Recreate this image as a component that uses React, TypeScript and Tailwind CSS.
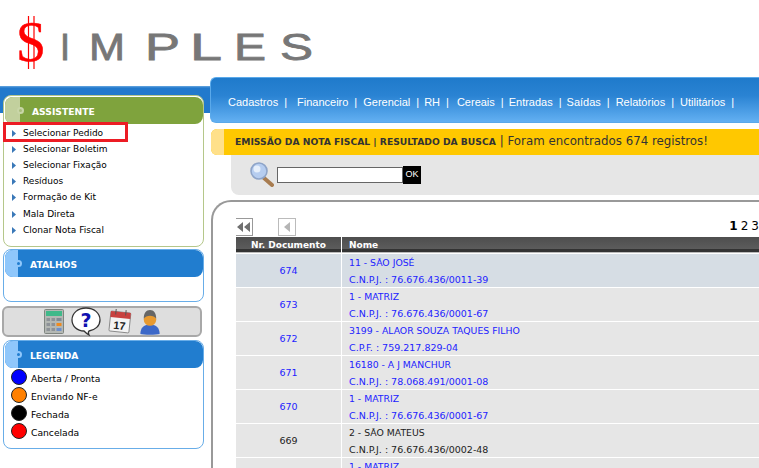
import React from "react";

const menuItems = [
  { label: "Cadastros", cls: "mr-[10px]" },
  { label: "Financeiro", cls: "mr-[6px]" },
  { label: "Gerencial", cls: "mr-[5px]" },
  { label: "RH", cls: "mr-[8px]" },
  { label: "Cereais", cls: "mr-[5px]" },
  { label: "Entradas", cls: "mr-[5px]" },
  { label: "Saídas", cls: "mr-[6px]" },
  { label: "Relatórios", cls: "mr-[6px]" },
  { label: "Utilitários", cls: "" },
];

const assistente = [
  { label: "Selecionar Pedido", cls: "h-[16px]", selected: true },
  { label: "Selecionar Boletim", cls: "h-[16px]", selected: false },
  { label: "Selecionar Fixação", cls: "h-[16px]", selected: false },
  { label: "Resíduos", cls: "h-[16px]", selected: false },
  { label: "Formação de Kit", cls: "h-[16px]", selected: false },
  { label: "Mala Direta", cls: "mt-[1px] h-[16px]", selected: false },
  { label: "Clonar Nota Fiscal", cls: "h-[16px]", selected: false },
];

const legenda = [
  { label: "Aberta / Pronta", cls: "bg-[#0000ff]" },
  { label: "Enviando NF-e", cls: "bg-[#ff8000]" },
  { label: "Fechada", cls: "bg-black" },
  { label: "Cancelada", cls: "bg-[#ff0000]" },
];

const rows = [
  { nr: "674", a: "11 - SÃO JOSÉ", b: "C.N.P.J. : 76.676.436/0011-39", hi: true, link: true },
  { nr: "673", a: "1 - MATRIZ", b: "C.N.P.J. : 76.676.436/0001-67", hi: false, link: true },
  { nr: "672", a: "3199 - ALAOR SOUZA TAQUES FILHO", b: "C.P.F. : 759.217.829-04", hi: false, link: true },
  { nr: "671", a: "16180 - A J MANCHUR", b: "C.N.P.J. : 78.068.491/0001-08", hi: false, link: true },
  { nr: "670", a: "1 - MATRIZ", b: "C.N.P.J. : 76.676.436/0001-67", hi: false, link: true },
  { nr: "669", a: "2 - SÃO MATEUS", b: "C.N.P.J. : 76.676.436/0002-48", hi: false, link: false },
  { nr: "668", a: "1 - MATRIZ", b: "C.N.P.J. : 76.676.436/0001-67", hi: false, link: true },
];

const logoLetters = [
  { c: "I", x: 45, w: 10 },
  { c: "M", x: 74, w: 36 },
  { c: "P", x: 130, w: 35 },
  { c: "L", x: 175, w: 32 },
  { c: "E", x: 219, w: 32 },
  { c: "S", x: 265, w: 33 },
];

const Logo = () => (
  <div className="h-[77px] pl-[15px] pt-[14px]">
    <svg width="310" height="60" viewBox="0 0 310 60">
      <text
        x="1"
        y="47"
        fontFamily="Liberation Serif"
        fontSize="56"
        fill="#f00"
        stroke="#f00"
        strokeWidth="0.5"
        textLength="30"
        lengthAdjust="spacingAndGlyphs"
      >
        S
      </text>
      <path d="M13.5 2V55M19 2V55" stroke="#f00" strokeWidth="1.2" />
      {logoLetters.map((l) => (
        <text
          key={l.c}
          x={l.x}
          y="46"
          fontFamily="Liberation Sans"
          fontSize="37.5"
          fill="#777777"
          stroke="#777777"
          strokeWidth="0.8"
          textLength={l.w}
          lengthAdjust="spacingAndGlyphs"
        >
          {l.c}
        </text>
      ))}
    </svg>
  </div>
);

const Arrow = () => (
  <svg width="4" height="7" viewBox="0 0 4 7" className="mr-[7px] mb-[2px] shrink-0">
    <path d="M0 0L4 3.5L0 7Z" fill="#3a78b8" />
  </svg>
);

const SectionHeader = ({
  title,
  bg,
  side,
  dot,
}: {
  title: string;
  bg: string;
  side: string;
  dot: string;
}) => (
  <div className={`relative flex h-[27px] items-center overflow-hidden rounded-[8px] ${bg}`}>
    <div className={`h-full ${side}`} />
    <div className={`absolute top-[10px] h-[7px] w-[7px] rounded-full border-2 ${dot}`} />
    <span className="ml-[12px] pt-[2px] text-[9.2px] font-bold text-white">{title}</span>
  </div>
);

const Calculator = () => (
  <svg width="20" height="25" viewBox="0 0 20 25">
    <rect x="0.5" y="0.5" width="19" height="24" rx="1" fill="#b4b8b4" stroke="#7f8580" />
    <rect x="2" y="2" width="16" height="5" fill="#3fb98a" />
    <g fill="#8d9298">
      <rect x="2.5" y="9" width="3.5" height="3" />
      <rect x="7.5" y="9" width="3.5" height="3" />
      <rect x="2.5" y="14" width="3.5" height="3" />
      <rect x="7.5" y="14" width="3.5" height="3" />
      <rect x="2.5" y="19" width="3.5" height="3" />
      <rect x="7.5" y="19" width="3.5" height="3" />
    </g>
    <rect x="12.5" y="9" width="5" height="3" fill="#7f8a96" />
    <rect x="12.5" y="14" width="5" height="3" fill="#f08a1d" />
    <rect x="12.5" y="19" width="5" height="3" fill="#6f8fc8" />
  </svg>
);

const Help = () => (
  <svg width="30" height="30" viewBox="0 0 30 30">
    <path
      d="M15 1C7 1 1 6 1 13c0 6 5 11 12 11 1 1 3 3 5 4-1-2-1-3 0-4 6-1 11-5 11-11C29 6 23 1 15 1Z"
      fill="#fff"
      stroke="#333"
      strokeWidth="1.3"
    />
    <text x="15" y="20" textAnchor="middle" fontFamily="DejaVu Sans" fontWeight="700" fontSize="19" fill="#1010b0">
      ?
    </text>
  </svg>
);

const Calendar = () => (
  <svg width="24" height="25" viewBox="0 0 24 25">
    <g transform="rotate(6 12 12)">
      <rect x="2" y="3" width="20" height="20" rx="1" fill="#f4f4f4" stroke="#777" strokeWidth="0.8" />
      <rect x="2" y="3" width="20" height="6" fill="#c8413f" />
      <path d="M7 0.5V6M17 0.5V6" stroke="#555" strokeWidth="1" />
      <text x="12" y="20.5" textAnchor="middle" fontFamily="Liberation Sans" fontWeight="700" fontSize="11" fill="#222">
        17
      </text>
    </g>
  </svg>
);

const Person = () => (
  <svg width="22" height="26" viewBox="0 0 22 27">
    <path d="M1 26c0-6 3-10 10-10s10 4 10 10c-3 1-17 1-20 0Z" fill="#3c68c8" />
    <circle cx="11" cy="11" r="6.5" fill="#e89a30" />
    <path d="M4.5 10C4.5 4 7 1 11 1s6.5 3 6.5 9C15 6 7 6 4.5 10Z" fill="#666" />
  </svg>
);

const Magnifier = () => (
  <svg width="24" height="25" viewBox="0 0 24 25">
    <path d="M14 16L22 23" stroke="#a87c50" strokeWidth="4" strokeLinecap="round" />
    <circle cx="9" cy="9" r="8" fill="#b6cdf0" stroke="#8ea4c8" strokeWidth="1.6" />
    <circle cx="7" cy="7" r="3.5" fill="#e6effb" />
  </svg>
);

const App = () => {
  return (
    <div className="h-[468px] w-[759px] overflow-hidden bg-white font-['DejaVu_Sans',sans-serif] text-[9px] text-black">
      <Logo />
      <div className="flex">
        {/* Sidebar */}
        <aside className="w-[210px] shrink-0 bg-[linear-gradient(transparent_9px,#6aa8e0_9px,#2279cc_11px,#2279cc_36px,transparent_36px)] bg-no-repeat pl-[3px] pt-[18px]">
          <div className="h-[152px] w-[201px] rounded-[8px] border border-[#b5c78a] bg-white pl-[1px] pt-[1px]">
            <SectionHeader
              title="ASSISTENTE"
              bg="bg-[#7fa33d]"
              side="w-[15px] bg-[#c2d09d]"
              dot="left-[12px] border-[#c9d6a8] bg-[#a9bd7c]"
            />
            <ul className="pl-[7px] pt-[2px]">
              {assistente.map((it) => (
                <li key={it.label} className={`relative flex items-center ${it.cls}`}>
                  <Arrow />
                  {it.label}
                  {it.selected && (
                    <div className="absolute left-[-9px] top-[-4px] h-[20px] w-[125px] border-[3px] border-[#ec1c24]" />
                  )}
                </li>
              ))}
            </ul>
          </div>

          <div className="mt-[2px] h-[53px] w-[201px] rounded-[8px] border border-[#68ade8] bg-white pl-[1px]">
            <SectionHeader
              title="ATALHOS"
              bg="bg-[#217dcf]"
              side="w-[13px] bg-[#8fc7fb]"
              dot="left-[10px] border-[#8fc7fb] bg-[#217dcf]"
            />
          </div>

          <div className="-ml-[1px] mt-[4px] flex h-[31px] w-[200px] items-center justify-center gap-[7px] rounded-[6px] border-2 border-[#a8a8a8] bg-[#dedede]">
            <Calculator />
            <Help />
            <Calendar />
            <Person />
          </div>

          <div className="mt-[3px] h-[109px] w-[201px] rounded-[8px] border border-[#68ade8] bg-white pl-[1px]">
            <SectionHeader
              title="LEGENDA"
              bg="bg-[#217dcf]"
              side="w-[13px] bg-[#8fc7fb]"
              dot="left-[10px] border-[#8fc7fb] bg-[#217dcf]"
            />
            <ul className="pl-[6px] pt-[2px] text-[9.2px]">
              {legenda.map((it) => (
                <li key={it.label} className="flex h-[18px] items-center">
                  <span className={`-mt-[4px] mr-[4px] h-[16px] w-[16px] shrink-0 rounded-full border border-[#222] ${it.cls}`} />
                  {it.label}
                </li>
              ))}
            </ul>
          </div>
        </aside>

        {/* Main */}
        <main className="min-w-0 flex-1">
          <nav className="flex h-[46px] items-center rounded-l-[6px] border border-r-0 border-[#5aa9ea] bg-[linear-gradient(#1f7acb,#2a83d3_40%,#63b0f2)] pl-[17px] pt-[4px] font-['Liberation_Sans',sans-serif] text-[11px] text-white">
            {menuItems.map((m) => (
              <span key={m.label} className={`whitespace-nowrap ${m.cls}`}>
                {m.label}
                <span className="ml-[6px]">|</span>
              </span>
            ))}
          </nav>

          <div className="ml-[1px] mt-[6px] flex h-[26px] items-center overflow-hidden rounded-l-[6px] bg-[#ffc800] text-[#333333]">
            <div className="h-full w-[13px] bg-[#ffe08a]" />
            <span className="ml-[11px] whitespace-nowrap text-[9.2px] font-bold">
              EMISSÃO DA NOTA FISCAL | RESULTADO DA BUSCA
            </span>
            <span className="ml-[4px] whitespace-nowrap text-[11.8px]">| Foram encontrados 674 registros!</span>
          </div>

          <div className="ml-[21px] flex h-[40px] items-center rounded-bl-[8px] bg-[#e6e6e6] pb-[1px] pl-[19px]">
            <Magnifier />
            <div className="ml-[3px] h-[16px] w-[126px] border border-[#666666] bg-white" />
            <div className="flex h-[18px] w-[18px] items-center justify-center bg-black font-['Liberation_Sans',sans-serif] text-[9px] text-white">
              OK
            </div>
          </div>

          <section className="ml-[1px] mt-[5px] h-[300px] rounded-tl-[20px] border-l-2 border-t-2 border-[#999999] bg-white pl-[23px] pt-[16px]">
            <div className="flex h-[19px] items-start">
              <div className="flex h-[18px] w-[17px] items-center justify-center border border-l-0 border-[#999999]">
                <svg width="14" height="10" viewBox="0 0 14 10">
                  <path d="M0 5L6 0V10ZM7 5L13 0V10Z" fill="#707070" />
                </svg>
              </div>
              <div className="ml-[25px] flex h-[18px] w-[18px] items-center justify-center border border-[#bbbbbb]">
                <svg width="7" height="10" viewBox="0 0 7 10">
                  <path d="M0 5L6 0V10Z" fill="#b5b5b5" />
                </svg>
              </div>
              <div className="ml-auto flex gap-[3px] text-[12px] leading-[16px]">
                <b>1</b>
                <span>2</span>
                <span>3</span>
              </div>
            </div>

            <div className="flex h-[16px] bg-[linear-gradient(#4e4e4e_0,#5c5c5c_12px,#333333_12px,#333333_15px,#bbbbbb_15px)] pt-[2px] text-[9px] font-bold text-white">
              <div className="flex w-[105px] items-center justify-center">Nr. Documento</div>
              <div className="-mt-[2px] w-[1px] bg-white" />
              <div className="flex items-center pl-[7px]">Nome</div>
            </div>

            {rows.map((r) => (
              <div
                key={r.nr}
                className={`mt-[1px] flex h-[33px] text-[9.5px] ${r.hi ? "bg-[#d6dde4]" : "bg-[#e6e6e6]"} ${
                  r.link ? "text-[#2222ff]" : "text-[#222222]"
                }`}
              >
                <div className="flex w-[105px] items-center justify-center pt-[2px]">{r.nr}</div>
                <div className="w-[1px] bg-white" />
                <div className="pl-[7px] leading-[17px]">
                  <div className="whitespace-nowrap text-[9.3px]">{r.a}</div>
                  <div className="whitespace-nowrap">{r.b}</div>
                </div>
              </div>
            ))}
          </section>
        </main>
      </div>
    </div>
  );
};

export default App;
